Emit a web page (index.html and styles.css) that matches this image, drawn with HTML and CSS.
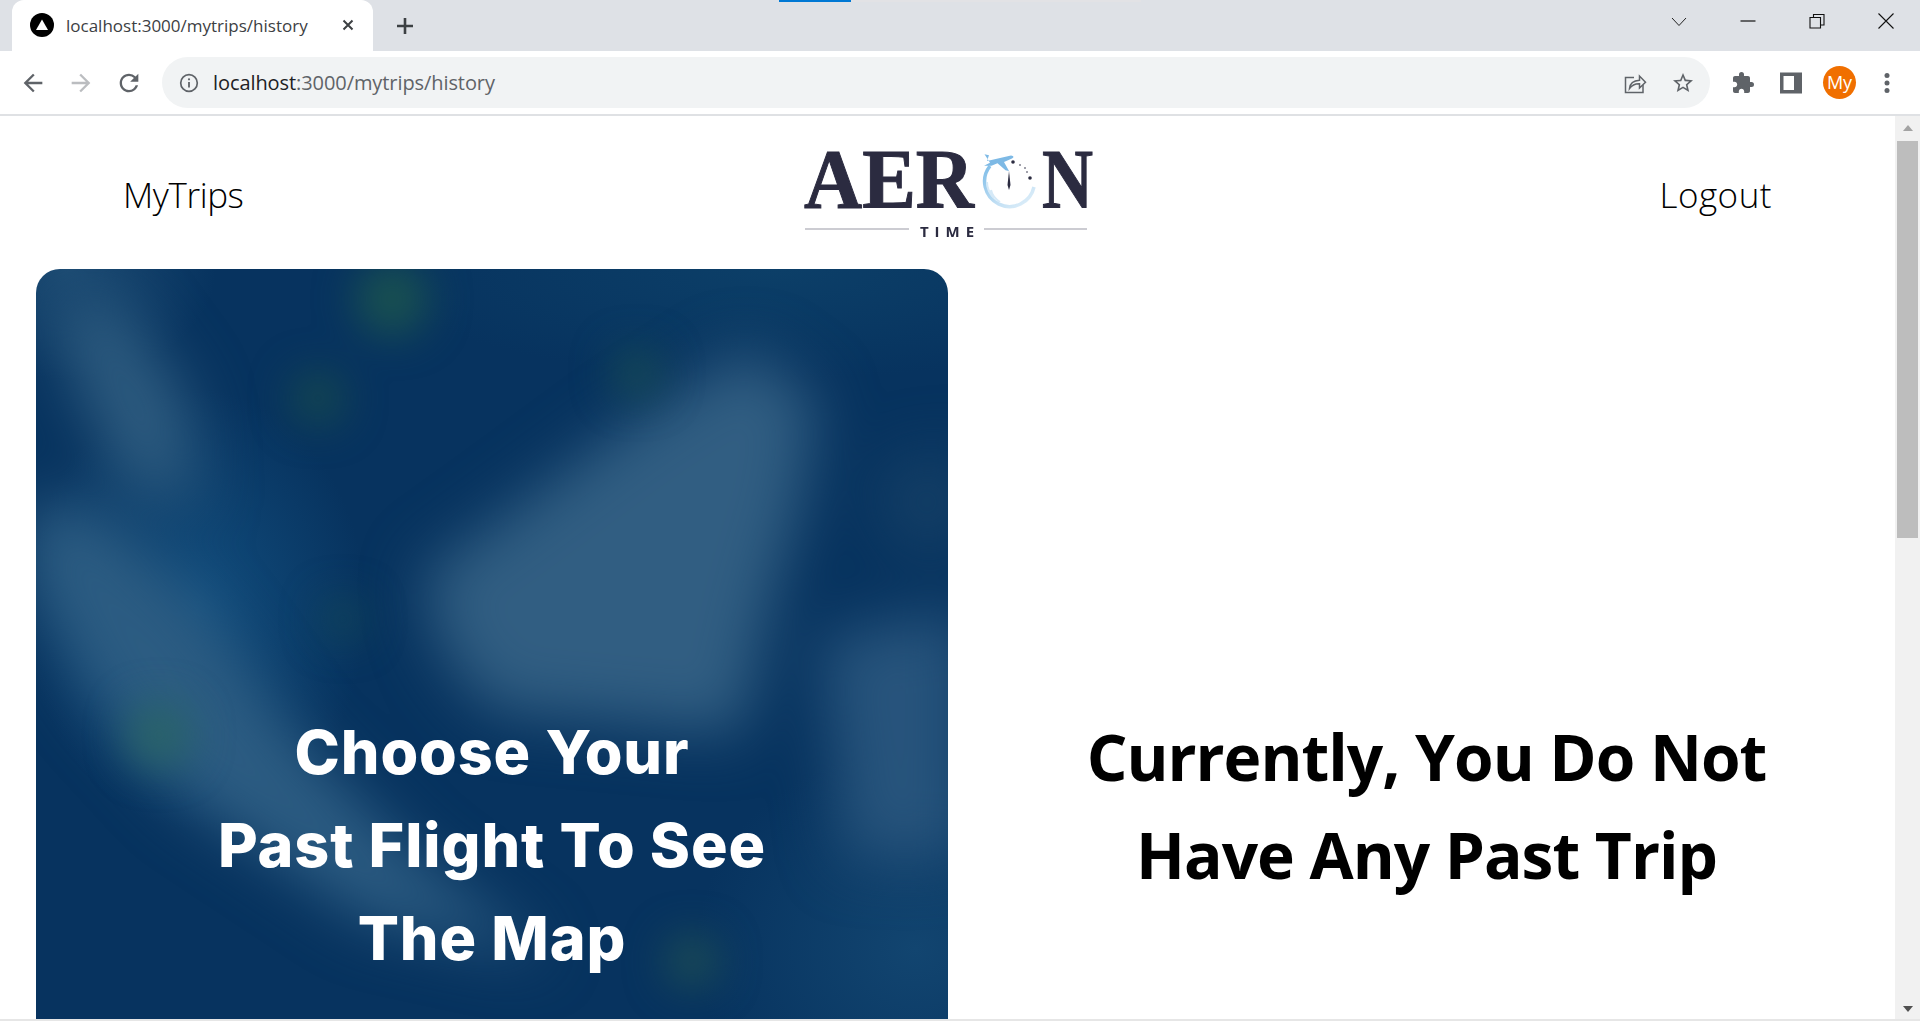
FILE: index.html
```html
<!DOCTYPE html>
<html lang="en">
<head>
    <meta charset="UTF-8">
    <title>localhost:3000/mytrips/history</title>
    <link rel="stylesheet" href="styles.css">
</head>
<body>
<div class="tabstrip">
    <div class="tab">
        <svg class="favicon" viewBox="0 0 24 24"><circle cx="12" cy="12" r="12" fill="#000"/><path d="M12 6.500l6 10.500H6z" fill="#fff"/></svg>
        <span class="tab-title">localhost:3000/mytrips/history</span>
        <svg class="tab-close" viewBox="0 0 12 12"><path d="M1.500 1.500l9 9M10.500 1.500l-9 9" stroke="#3c4043" stroke-width="2" fill="none"/></svg>
    </div>
    <svg class="new-tab" viewBox="0 0 18 18"><path d="M9 1v16M1 9h16" stroke="#3c4043" stroke-width="2.600" fill="none"/></svg>
    <div class="loadbar"><div class="loadbar-fill"></div></div>
    <div class="win-controls">
        <svg class="win-btn" viewBox="0 0 16 16"><path d="M1 5l7 7.500L15 5" stroke="#222" stroke-width="1" fill="none"/></svg>
        <svg class="win-btn" viewBox="0 0 16 16"><path d="M0.500 8h15" stroke="#111" stroke-width="1.200" fill="none"/></svg>
        <svg class="win-btn" viewBox="0 0 16 16"><path d="M1 4.500h10.500v10.500H1zM4.500 4.500V1.500H15v10.500h-3.500" stroke="#111" stroke-width="1.100" fill="none"/></svg>
        <svg class="win-btn" viewBox="0 0 16 16"><path d="M0.500 0.500l15 15M15.500 0.500l-15 15" stroke="#111" stroke-width="1.100" fill="none"/></svg>
    </div>
</div>
<div class="toolbar">
    <div class="nav-btns">
        <svg class="nav-icon" viewBox="0 0 24 24"><path d="M20 11H7.830l5.590-5.590L12 4l-8 8 8 8 1.410-1.410L7.830 13H20v-2z" fill="#5f6368"/></svg>
        <svg class="nav-icon" viewBox="0 0 24 24"><path d="M4 11h12.170l-5.590-5.590L12 4l8 8-8 8-1.410-1.410L16.170 13H4v-2z" fill="#bbbdc0"/></svg>
        <svg class="nav-icon" viewBox="0 0 24 24"><path d="M17.650 6.350A7.958 7.958 0 0 0 12 4c-4.420 0-7.990 3.580-7.990 8s3.570 8 7.990 8c3.730 0 6.840-2.550 7.730-6h-2.080A5.990 5.990 0 0 1 12 18c-3.310 0-6-2.690-6-6s2.690-6 6-6c1.660 0 3.140.690 4.220 1.780L13 11h7V4l-2.350 2.350z" fill="#5f6368"/></svg>
    </div>
    <div class="omnibox">
        <svg class="info-icon" viewBox="0 0 20 20"><circle cx="10" cy="10" r="8.300" stroke="#5f6368" stroke-width="1.700" fill="none"/><path d="M10 9v5.500" stroke="#5f6368" stroke-width="1.800"/><circle cx="10" cy="6.300" r="1.100" fill="#5f6368"/></svg>
        <span class="url"><span class="url-host">localhost</span>:3000/mytrips/history</span>
        <div class="omni-right">
            <svg class="omni-icon" viewBox="0 0 24 24"><path d="M11 6.500H2.500V21.500H20V14" stroke="#5f6368" stroke-width="1.500" fill="none"/><path d="M6.500 17.500c.5-5 4-8 10-8.300V5l6 6.200-6 5.800v-4.300c-4.300-.2-7.500 1.300-10 4.800z" stroke="#5f6368" stroke-width="1.500" fill="#f1f3f4"/></svg>
            <svg class="omni-icon" viewBox="0 0 24 24"><path d="M22 9.240l-7.190-.620L12 2 9.190 8.630 2 9.240l5.460 4.730L5.820 21 12 17.270 18.180 21l-1.630-7.030L22 9.240zM12 15.400l-3.760 2.270 1-4.280-3.320-2.880 4.380-.380L12 6.100l1.710 4.040 4.380.380-3.320 2.880 1 4.280L12 15.400z" fill="#5f6368"/></svg>
        </div>
    </div>
    <div class="tool-right">
        <svg class="tool-icon" viewBox="0 0 24 24"><path d="M20.500 11H19V7c0-1.100-.900-2-2-2h-4V3.500a2.500 2.500 0 0 0-5 0V5H4c-1.100 0-1.990.900-1.990 2v3.800H3.500c1.490 0 2.700 1.210 2.700 2.700s-1.210 2.700-2.700 2.700H2V20c0 1.100.900 2 2 2h3.800v-1.500c0-1.490 1.210-2.700 2.700-2.700s2.700 1.210 2.700 2.700V22H17c1.100 0 2-.900 2-2v-4h1.500a2.500 2.500 0 0 0 0-5z" fill="#5f6368"/></svg>
        <svg class="tool-icon" viewBox="0 0 24 24"><path d="M1 1.500h22v21H1zM4.500 5v14H15V5z" fill="#5f6368" fill-rule="evenodd"/></svg>
        <div class="avatar">My</div>
        <svg class="tool-icon" viewBox="0 0 24 24"><circle cx="12" cy="4.500" r="2.500" fill="#5f6368"/><circle cx="12" cy="12" r="2.500" fill="#5f6368"/><circle cx="12" cy="19.500" r="2.500" fill="#5f6368"/></svg>
    </div>
</div>
<div class="viewport">
    <div class="page">
        <nav class="topnav">
            <a class="nav-link nav-mytrips">MyTrips</a>
            <svg class="logo" viewBox="0 -24 300 116">
                <defs>
                    <linearGradient id="ring" x1="0" y1="0" x2="1" y2="1">
                        <stop offset="0" stop-color="#7fbde8"/>
                        <stop offset="0.6" stop-color="#c3e0f4"/>
                        <stop offset="1" stop-color="#e3f1fa"/>
                    </linearGradient>
                </defs>
                <text class="logo-word" x="0" y="56" textLength="170" lengthAdjust="spacingAndGlyphs">AER</text>
                <text class="logo-word" x="238" y="56" textLength="51" lengthAdjust="spacingAndGlyphs">N</text>
                <path d="M186 14A25 25 0 1 0 230 35" stroke="url(#ring)" stroke-width="3.500" fill="none"/>
                <path d="M190 46c-5-5-7-10-7-16M196 50c-5-3-8-7-9-12" stroke="#d5e9f7" stroke-width="2" fill="none"/>
                <path d="M183 9l24-5.500c3 .2 3 2 1 3l-8 3.500 5 9-3.500-.8-8-7-6 2.500-7.500 0 6-3-5.500-8.500 4.500 1z" fill="#7db9e5"/>
                <path d="M205 19l1.500 14-1.500 5-1.500-5z" fill="#2b2b40"/>
                <circle cx="209" cy="10" r="1.800" fill="#2b2b40"/>
                <circle cx="216" cy="13" r="0.800" fill="#2b2b40"/>
                <circle cx="221" cy="16" r="0.800" fill="#2b2b40"/>
                <circle cx="223" cy="20" r="0.800" fill="#2b2b40"/>
                <circle cx="226" cy="26" r="1.800" fill="#2b2b40"/>
                <path d="M1 77h104M180 77h103" stroke="#9a9aa6" stroke-width="1.200"/>
                <text class="logo-sub" x="146" y="85" text-anchor="middle">TIME</text>
            </svg>
            <a class="nav-link">Logout</a>
        </nav>
        <main class="content">
            <section class="map-card">
                <svg class="map-bg" viewBox="0 0 912 760">
                    <defs>
                        <filter id="soft" filterUnits="userSpaceOnUse" x="-200" y="-200" width="1312" height="1160" color-interpolation-filters="sRGB"><feGaussianBlur stdDeviation="30"/></filter>
                        <filter id="spot" filterUnits="userSpaceOnUse" x="-200" y="-200" width="1312" height="1160" color-interpolation-filters="sRGB"><feGaussianBlur stdDeviation="20"/></filter>
                    </defs>
                    <g filter="url(#soft)">
                        <path d="M386 306L478 240 600 150 711 80 780 130 765 230 735 330 705 465 454 441 405 380z" fill="#315e82"/>
                        <path d="M19 30L80 30 152 129 160 240 86 213 34 104z" fill="#2d5b7f"/>
                        <path d="M-10 230L60 240 168 340 258 464 370 580 515 690 330 650 148 530 56 430-10 310z" fill="#2c5c82"/>
                        <path d="M784 368L930 340 930 590 810 590z" fill="#27547c"/>
                        <path d="M840 200L930 180 930 280 860 280z" fill="#143f66"/>
                    </g>
                    <g filter="url(#spot)">
                        <circle cx="356" cy="30" r="36" fill="#1a5250"/>
                        <circle cx="282" cy="129" r="26" fill="#15484f"/>
                        <circle cx="601" cy="104" r="24" fill="#164a55"/>
                        <circle cx="123" cy="466" r="32" fill="#2a6468"/>
                        <circle cx="656" cy="692" r="26" fill="#1d4d55"/>
                        <circle cx="307" cy="350" r="20" fill="#124658"/>
                    </g>
                </svg>
                <h2 class="map-title">Choose Your<br>Past Flight To See<br>The Map</h2>
            </section>
            <section class="empty">
                <h1 class="empty-title">Currently, You Do Not<br>Have Any Past Trip</h1>
            </section>
        </main>
    </div>
    <div class="scrollbar">
        <div class="arrow-up"></div>
        <div class="thumb"></div>
        <div class="track"></div>
        <div class="arrow-down"></div>
    </div>
</div>
<div class="taskbar-edge"></div>
</body>
</html>
```

FILE: styles.css
```css
* { box-sizing: border-box; }
html, body { height: 100%; }
body { margin: 0; display: flex; flex-direction: column; overflow: hidden; background: #fff; font-family: "Open Sans", "Noto Sans", sans-serif; color: #000; }

/* browser chrome */
.tabstrip { position: relative; height: 51px; flex: none; display: flex; align-items: flex-start; padding-left: 12px; background: #dee1e6; }
.tab { width: 361px; height: 51px; display: flex; align-items: center; padding: 0 0 1px 18px; background: #fff; border-radius: 12px 12px 0 0; }
.favicon { width: 24px; height: 24px; flex: none; }
.tab-title { margin-left: 12px; font-size: 17px; color: #3c4043; white-space: nowrap; width: 264px; }
.tab-close { width: 12px; height: 12px; margin-left: 12px; flex: none; }
.new-tab { width: 18px; height: 18px; margin: 17px 0 0 23px; flex: none; }
.loadbar { position: absolute; left: 779px; top: 0; width: 362px; height: 2px; background: #e2e2e5; }
.loadbar-fill { width: 72px; height: 2px; background: #0078d4; }
.win-controls { margin-left: auto; display: flex; gap: 53px; padding: 13px 26px 0 0; }
.win-btn { width: 16px; height: 16px; }

.toolbar { height: 65px; flex: none; display: flex; align-items: center; background: #fff; border-bottom: 2px solid #dfe1e4; }
.nav-btns { width: 162px; display: flex; gap: 20px; padding-left: 19px; }
.nav-icon { width: 28px; height: 28px; flex: none; display: block; }
.tool-icon { width: 24px; height: 24px; flex: none; display: block; }
.omnibox { width: 1548px; height: 51px; display: flex; align-items: center; padding: 0 15px 0 17px; background: #f1f3f4; border-radius: 26px; }
.info-icon { width: 20px; height: 20px; flex: none; }
.url { margin-left: 14px; font-size: 20px; letter-spacing: -0.08px; color: #5f6368; white-space: nowrap; }
.url-host { color: #202124; }
.omni-right { margin-left: auto; display: flex; gap: 24px; }
.omni-icon { width: 24px; height: 24px; display: block; }
.tool-right { display: flex; align-items: center; margin-left: 21px; gap: 24px; }
.avatar { width: 33px; height: 33px; margin: 0 -5px 0 -4px; border-radius: 50%; background: #f06f00; color: #fff; font-size: 18px; line-height: 33px; text-align: center; }

/* page */
.viewport { flex: 1; min-height: 0; display: flex; overflow: hidden; }
.page { flex: 1; min-width: 0; }
.topnav { height: 153px; display: flex; align-items: center; justify-content: space-between; padding: 4px 123px 0 124px; }
.nav-link { font-size: 35px; font-weight: 350; letter-spacing: 0.5px; line-height: 48px; color: #000; }
.nav-mytrips { letter-spacing: -0.4px; margin-left: -1px; }
.logo { width: 300px; height: 116px; display: block; margin: -18px -12px 0 -6px; filter: blur(0.4px); }
.logo-word { font-family: "Liberation Serif", serif; font-weight: 700; font-size: 84px; fill: #2b2b40; stroke: #2b2b40; stroke-width: 1px; }
.logo-sub { font-family: "Open Sans", sans-serif; font-weight: 700; font-size: 15px; letter-spacing: 6px; fill: #2b2b40; }

.content { display: flex; padding-left: 36px; }
.map-card { position: relative; width: 912px; height: 900px; flex: none; padding-top: 437px; overflow: hidden; border-radius: 24px;
    background:
        radial-gradient(ellipse 170px 220px at 160px 340px, #124e7e, transparent),
        radial-gradient(ellipse 220px 200px at 880px 680px, #124570, transparent),
        radial-gradient(ellipse 400px 110px at 740px 0, #0c3f68, transparent),
        radial-gradient(ellipse 150px 110px at 30px 0, #1b4a72, transparent),
        #07335f; }
.map-bg { position: absolute; left: 0; top: 0; width: 912px; height: 760px; }
.map-title { position: relative; margin: 0; font-family: Inter, sans-serif; font-weight: 800; font-size: 61px; letter-spacing: 0.9px; line-height: 93px; color: #fff; text-align: center; }
.empty { flex: 1; padding: 439px 0 0 10px; }
.empty-title { margin: 0; font-size: 64px; letter-spacing: -1px; line-height: 98px; font-weight: 700; text-align: center; }

.scrollbar { width: 25px; flex: none; display: flex; flex-direction: column; align-items: center; background: #f1f1f1; }
.arrow-up { width: 0; height: 0; margin: 9px 0 10px; border: 5.500px solid transparent; border-top: 0; border-bottom: 6px solid #a3a3a3; }
.thumb { width: 21px; height: 397px; background: #bdbdbd; }
.track { flex: 1; }
.arrow-down { width: 0; height: 0; margin-bottom: 7px; border: 5.500px solid transparent; border-bottom: 0; border-top: 6px solid #505050; }
.taskbar-edge { height: 2px; flex: none; background: #e6e6e6; }
```
